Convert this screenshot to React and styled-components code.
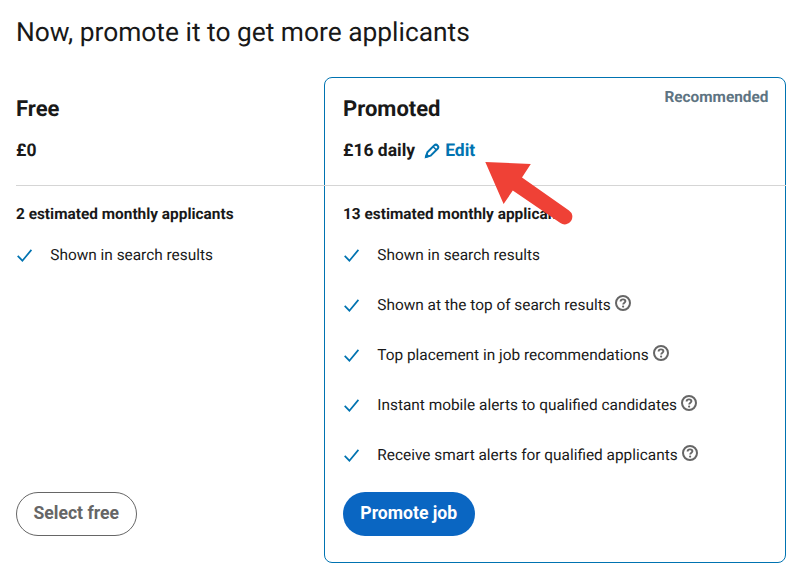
import React from "react";
import styled, { createGlobalStyle } from "styled-components";

const GlobalStyle = createGlobalStyle`
  * {
    box-sizing: border-box;
  }
  body {
    margin: 0;
    background-color: white;
    color: #191919;
    font-family: Roboto, "Liberation Sans", sans-serif;
    text-rendering: geometricPrecision;
  }
`;

const Page = styled.main`
  position: relative;
  width: 807px;
  height: 567px;
  padding: 16px 21px 4px 16px;
  overflow: hidden;
`;

const Title = styled.h1`
  margin: 0 0 27px;
  font-size: 26.35px;
  font-weight: 400;
  line-height: 34px;
  white-space: nowrap;
`;

const Plans = styled.div`
  display: grid;
  grid-template-columns: 308px 462px;
  height: 486px;
`;

const Plan = styled.section`
  display: flex;
  flex-direction: column;
  border: 1px solid ${props => (props.$promoted ? "#0073b1" : "transparent")};
  border-width: ${props => (props.$promoted ? "1px" : "1px 0")};
  border-radius: ${props => (props.$promoted ? "8px" : "0")};
`;

const PlanHead = styled.header`
  display: flex;
  justify-content: space-between;
  height: 108px;
  margin: 0 ${props => (props.$promoted ? "-1px" : "0")};
  padding: ${props => (props.$promoted ? "0 17.5px 0 19px" : "0")};
  border-bottom: 1px solid #d5d5d5;
`;

const PlanName = styled.h2`
  margin: 17px 0 14px;
  font-size: 22px;
  font-weight: 700;
  line-height: 29px;
`;

const Price = styled.div`
  display: flex;
  align-items: center;
  font-size: 17.5px;
  font-weight: 700;
  line-height: 26px;
`;

const EditLink = styled.a`
  display: flex;
  align-items: center;
  gap: 5px;
  margin-left: 9px;
  color: #0073b1;
`;

const Recommended = styled.span`
  margin-top: 9px;
  color: #5e7482;
  font-size: 15.4px;
  font-weight: 700;
  line-height: 20px;
`;

const PlanBody = styled.div`
  display: flex;
  flex: 1;
  flex-direction: column;
  align-items: flex-start;
  padding: ${props => (props.$promoted ? "18px 18px 26px" : "18px 0 26px")};
`;

const Estimate = styled.p`
  margin: 0 0 6px;
  font-size: 15.4px;
  font-weight: 700;
  line-height: 20px;
  white-space: nowrap;
`;

const Features = styled.ul`
  margin: 0 0 auto;
  padding: 0;
  list-style: none;
`;

const Feature = styled.li`
  display: flex;
  align-items: center;
  height: 50px;
  font-size: 15.4px;
  white-space: nowrap;
`;

const CheckIcon = styled.svg`
  width: 17px;
  height: 16px;
  margin: 0 17px 0 0.3px;
`;

const HelpIcon = styled.svg`
  width: 16px;
  height: 16px;
  margin: -4px 0 0 4.2px;
`;

const Button = styled.button`
  width: ${props => (props.$primary ? "132px" : "121px")};
  height: 44px;
  padding: 0 0.5px 2px 0;
  border: ${props => (props.$primary ? "0" : "1px solid #666666")};
  border-radius: 22px;
  background-color: ${props => (props.$primary ? "#0a66c2" : "white")};
  color: ${props => (props.$primary ? "white" : "#666666")};
  font-family: inherit;
  font-size: 17.6px;
  font-weight: 700;
  white-space: nowrap;
`;

const Arrow = styled.svg`
  position: absolute;
  top: 158px;
  left: 482px;
  width: 94px;
  height: 70px;
`;

const Pencil = () => (
  <svg width="16" height="16" viewBox="0 0 16 16" fill="none">
    <path
      d="M1.8 14L3.4 9.3L10.2 2.4Q12 0.9 13.5 2.5Q15.1 4 13.6 5.8L6.7 12.6Z"
      stroke="#0073b1"
      strokeWidth="2"
      strokeLinejoin="round"
    />
    <path d="M0.6 15.4L2.4 10L6 13.6Z" fill="#0073b1" />
    <path d="M9.2 3.8L12.2 6.8" stroke="#0073b1" strokeWidth="1.5" />
  </svg>
);

const Check = () => (
  <CheckIcon viewBox="0 0 17 16" fill="none">
    <path d="M1.7 8.8L6.4 13.7L15.4 2.9" stroke="#0073b1" strokeWidth="1.7" />
  </CheckIcon>
);

const Help = () => (
  <HelpIcon viewBox="0 0 16 16" fill="none" stroke="#666666">
    <circle cx="8" cy="8" r="7" strokeWidth="2" />
    <path
      d="M5.6 6.6C5.6 5 6.6 4.4 8 4.4C9.5 4.4 10.4 5.1 10.4 6.3C10.4 7.7 8.2 7.8 8.2 9.6"
      strokeWidth="1.9"
    />
    <circle cx="8.1" cy="11.6" r="1.1" fill="#666666" stroke="none" />
  </HelpIcon>
);

const promotedFeatures = [
  { text: "Shown in search results" },
  { text: "Shown at the top of search results", help: true },
  { text: "Top placement in job recommendations", help: true },
  { text: "Instant mobile alerts to qualified candidates", help: true },
  { text: "Receive smart alerts for qualified applicants", help: true }
];

const FeatureList = ({ items }) => (
  <Features>
    {items.map(item => (
      <Feature key={item.text}>
        <Check />
        {item.text}
        {item.help && <Help />}
      </Feature>
    ))}
  </Features>
);

const App = () => (
  <Page>
    <GlobalStyle />
    <Title>Now, promote it to get more applicants</Title>
    <Plans>
      <Plan>
        <PlanHead>
          <div>
            <PlanName>Free</PlanName>
            <Price>£0</Price>
          </div>
        </PlanHead>
        <PlanBody>
          <Estimate>2 estimated monthly applicants</Estimate>
          <FeatureList items={[{ text: "Shown in search results" }]} />
          <Button>Select free</Button>
        </PlanBody>
      </Plan>
      <Plan $promoted>
        <PlanHead $promoted>
          <div>
            <PlanName>Promoted</PlanName>
            <Price>
              £16 daily
              <EditLink>
                <Pencil />
                Edit
              </EditLink>
            </Price>
          </div>
          <Recommended>Recommended</Recommended>
        </PlanHead>
        <PlanBody $promoted>
          <Estimate>13 estimated monthly applicants</Estimate>
          <FeatureList items={promotedFeatures} />
          <Button $primary>Promote job</Button>
        </PlanBody>
      </Plan>
    </Plans>
    <Arrow viewBox="482 158 94 70">
      <path
        d="M485.3 162L530.8 164L522 177.4L569 210.4A7.6 7.6 0 0 1 560.4 223.1L512.8 190.6L503.6 204Z"
        fill="#ef4136"
      />
    </Arrow>
  </Page>
);

export default App;
